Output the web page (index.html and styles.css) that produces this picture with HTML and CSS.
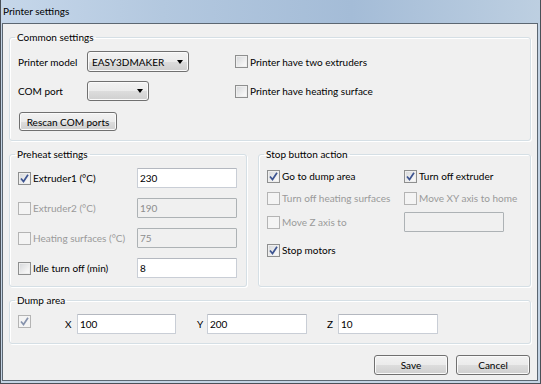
FILE: index.html
```html
<!DOCTYPE html>
<html lang="en">
<head>
  <meta charset="UTF-8" />
  <title>Printer settings</title>
  <link rel="stylesheet" href="styles.css">
</head>
<body>
  <div class="window">
    <div class="titlebar">Printer settings</div>

    <div class="client">
      <fieldset class="group common">
        <legend>Common settings</legend>
        <div class="common-grid">
          <span class="label">Printer model</span>
          <div class="combo combo-model"><span>EASY3DMAKER</span><i class="arrow"></i></div>
          <label class="check"><span class="box"></span>Printer have two extruders</label>

          <span class="label">COM port</span>
          <div class="combo combo-port"><span></span><i class="arrow"></i></div>
          <label class="check"><span class="box"></span>Printer have heating surface</label>
        </div>
        <button class="btn rescan">Rescan COM ports</button>
      </fieldset>

      <div class="middle">
        <fieldset class="group preheat">
          <legend>Preheat settings</legend>
          <div class="row">
            <label class="check"><span class="box"><svg class="tick" viewBox="0 0 11 11"><path d="M2 5.5l2.5 3L9 1.8" /></svg></span>Extruder1 (°C)</label>
            <input class="field" type="text" value="230">
          </div>
          <div class="row">
            <label class="check off"><span class="box"></span>Extruder2 (°C)</label>
            <input class="field" type="text" value="190" disabled>
          </div>
          <div class="row">
            <label class="check off"><span class="box"></span>Heating surfaces (°C)</label>
            <input class="field" type="text" value="75" disabled>
          </div>
          <div class="row">
            <label class="check"><span class="box"></span>Idle turn off (min)</label>
            <input class="field" type="text" value="8">
          </div>
        </fieldset>

        <fieldset class="group stop">
          <legend>Stop button action</legend>
          <div class="stop-grid">
            <label class="check"><span class="box"><svg class="tick" viewBox="0 0 11 11"><path d="M2 5.5l2.5 3L9 1.8" /></svg></span>Go to dump area</label>
            <label class="check"><span class="box"><svg class="tick" viewBox="0 0 11 11"><path d="M2 5.5l2.5 3L9 1.8" /></svg></span>Turn off extruder</label>

            <label class="check off"><span class="box"></span>Turn off heating surfaces</label>
            <label class="check off"><span class="box"></span>Move XY axis to home</label>

            <label class="check off"><span class="box"></span>Move Z axis to</label>
            <input class="field" type="text" value="" disabled>

            <label class="check"><span class="box"><svg class="tick" viewBox="0 0 11 11"><path d="M2 5.5l2.5 3L9 1.8" /></svg></span>Stop motors</label>
          </div>
        </fieldset>
      </div>

      <fieldset class="group dump">
        <legend>Dump area</legend>
        <div class="dump-row">
          <span class="check off dump-check"><span class="box"><svg class="tick" viewBox="0 0 11 11"><path d="M2 5.5l2.5 3L9 1.8" /></svg></span></span>
          <span class="axis axis-x">X</span>
          <input class="field" type="text" value="100">
          <span class="axis axis-y">Y</span>
          <input class="field" type="text" value="200">
          <span class="axis axis-z">Z</span>
          <input class="field" type="text" value="10">
        </div>
      </fieldset>

      <div class="actions">
        <button class="btn">Save</button>
        <button class="btn">Cancel</button>
      </div>
    </div>
  </div>
</body>
</html>
```

FILE: styles.css
```css
* {
  box-sizing: border-box;
}

body {
  margin: 0;
  font-family: Lato, "Liberation Sans", sans-serif;
  font-size: 10px;
  color: #000;
  background: #fff;
}

.window {
  width: 541px;
  height: 384px;
  display: flex;
  flex-direction: column;
  background: #c3d3e4;
  border: 1px solid #4a5058;
  border-top: 0;
}

.titlebar {
  height: 23px;
  line-height: 22px;
  padding-left: 2px;
  background: linear-gradient(to right, #c6d7ea 0%, #b3c8df 30%, #a4bcd7 65%, #bdcfe1 100%);
}

.client {
  flex: 1;
  margin: 0 2px 2px 1px;
  padding: 6px 6px 0 6px;
  background: #f0f0f0;
  border: 1px solid #5c6772;
}

/* group boxes */
.group {
  margin: 0;
  min-width: 0;
  border: 1px solid #d5dfe5;
  border-radius: 3px;
  box-shadow: inset 1px 1px 0 #fff, 1px 1px 0 #fff;
}

.group legend {
  padding: 0 2px;
  margin-left: -3px;
  line-height: 14px;
}

.common {
  padding: 7px 8px 9px 8px;
}

.common-grid {
  display: grid;
  grid-template-columns: 69px 148px 1fr;
  grid-template-rows: 21px 20px;
  row-gap: 9px;
  align-items: center;
}

.label {
  line-height: 14px;
}

.combo {
  display: flex;
  align-items: center;
  justify-content: space-between;
  height: 21px;
  padding: 0 5px 0 4px;
  border: 1px solid #707070;
  border-radius: 3px;
  background: linear-gradient(#f2f2f2 0%, #ebebeb 50%, #dddddd 50%, #cfcfcf 100%);
  box-shadow: inset 0 0 0 1px #fafafa;
}

.combo-model {
  width: 102px;
}

.combo-port {
  width: 62px;
  height: 20px;
}

.arrow {
  width: 0;
  height: 0;
  border-left: 3.5px solid transparent;
  border-right: 3.5px solid transparent;
  border-top: 4px solid #000;
}

.btn {
  height: 20px;
  padding: 0;
  font-family: inherit;
  font-size: inherit;
  color: #000;
  border: 1px solid #707070;
  border-radius: 3px;
  background: linear-gradient(#f2f2f2 0%, #ebebeb 50%, #dddddd 50%, #cfcfcf 100%);
  box-shadow: inset 0 0 0 1px #fafafa;
}

.rescan {
  width: 98px;
  height: 19px;
  margin: 11px 0 0 1px;
}

/* checkboxes */
.check {
  display: flex;
  align-items: center;
  gap: 2px;
  line-height: 14px;
  white-space: nowrap;
}

.box {
  flex: none;
  width: 13px;
  height: 13px;
  border: 1px solid #8e8f8f;
  background: linear-gradient(135deg, #d4d6d9 0%, #f3f3f3 70%, #fbfbfb 100%);
  box-shadow: inset 0 0 0 1px #eeeeee;
}

.tick {
  display: block;
  width: 11px;
  height: 11px;
}

.tick path {
  fill: none;
  stroke: #3d5491;
  stroke-width: 1.7;
}

.check.off {
  color: #9a9a9a;
}

.check.off .box {
  border-color: #b4b4b4;
  background: #f4f4f4;
  box-shadow: none;
}

.check.off .tick path {
  stroke: #8793ad;
}

/* text fields */
.field {
  width: 100px;
  height: 20px;
  padding: 0 2px;
  font-family: inherit;
  font-size: inherit;
  color: #000;
  background: #fff;
  border: 1px solid #c9ced6;
  border-top-color: #b4b8c0;
  border-radius: 1px;
  outline: none;
}

.field:disabled {
  color: #8d8d8d;
  background: #f0f0f0;
  border-color: #adb2b5;
}

/* middle row */
.middle {
  display: flex;
  gap: 11px;
  margin-top: 6px;
}

.preheat {
  width: 238px;
  padding: 7px 9px 8px 8px;
  display: flex;
  flex-direction: column;
  gap: 10px;
}

.row {
  display: flex;
  align-items: center;
  justify-content: space-between;
  height: 20px;
}

.stop {
  flex: 1;
  padding: 4px 8px 8px 8px;
}

.stop-grid {
  display: grid;
  grid-template-columns: 137px 1fr;
  grid-template-rows: 22px 22px 26px 30px;
  align-items: center;
}

/* dump area */
.dump {
  margin-top: 6px;
  padding: 7px 8px 9px 8px;
}

.dump-row {
  display: flex;
  align-items: center;
  height: 20px;
}

.dump-check {
  align-self: flex-start;
  margin-top: 1px;
}

.axis {
  line-height: 14px;
}

.axis-x {
  width: 12px;
  margin-left: 34px;
}

.axis-y {
  width: 10px;
  margin-left: 21px;
}

.axis-z {
  width: 11px;
  margin-left: 20px;
}

.dump-row .field:first-of-type {
  width: 99px;
}

/* dialog buttons */
.actions {
  display: flex;
  justify-content: flex-end;
  gap: 8px;
  margin: 11px 1px 0 0;
}

.actions .btn {
  width: 74px;
}
```
